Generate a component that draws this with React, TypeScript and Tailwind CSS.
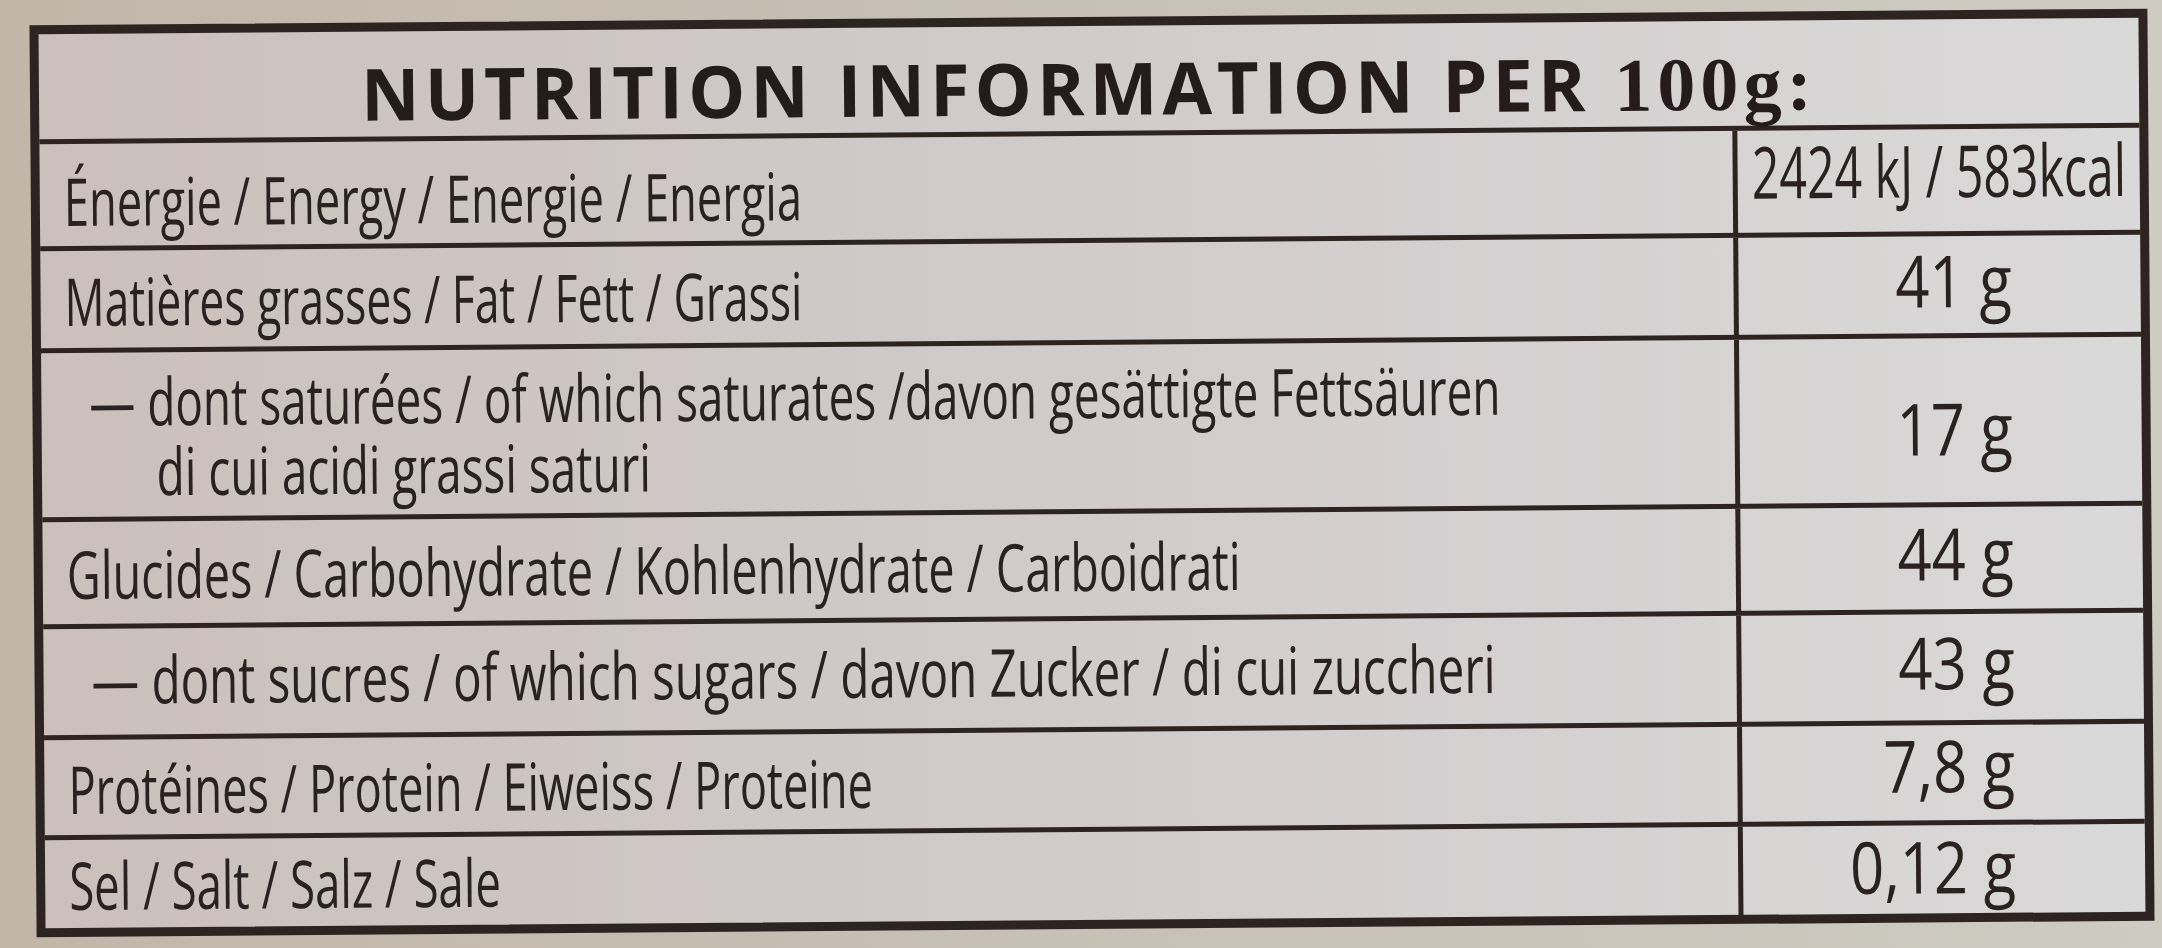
import React from "react";

const ink = "text-[#2a2220]";
const base = "inline-block origin-left whitespace-nowrap text-[66px] font-medium leading-none";
const value = "inline-block origin-right scale-x-[0.83] whitespace-nowrap text-[72px] font-medium leading-none";

function DataRow({
  h,
  indent,
  last,
  children,
  val,
  vpad = "pb-[12px]",
  lpad = "",
}: {
  h: string;
  indent?: boolean;
  last?: boolean;
  children: React.ReactNode;
  val: React.ReactNode;
  vpad?: string;
  lpad?: string;
}) {
  return (
    <div className={`flex ${h} ${last ? "" : "border-b-[5px]"} border-[#2d2421]`}>
      <div
        className={`flex w-[1698px] shrink-0 items-center border-r-[5px] border-[#2d2421] ${
          indent ? "pl-[48px]" : "pl-[24px]"
        } ${lpad}`}
      >
        {children}
      </div>
      <div className={`flex min-w-0 flex-1 items-center justify-end pr-[129px] ${vpad}`}>{val}</div>
    </div>
  );
}

export default function App() {
  return (
    <div
      className={`h-[948px] w-[2162px] overflow-hidden bg-linear-to-r from-[#c2b6a9] to-[#cdcbc2] pt-[17px] pl-[33px] font-['Open_Sans','Liberation_Sans',sans-serif] ${ink}`}
    >
      <div className="flex h-[912px] w-[2118px] rotate-[-0.45deg] flex-col border-[9px] border-[#2d2421] bg-linear-to-r from-[#cbc0bb] via-[#d2cbcc] to-[#dad9d9]">
        {/* Title */}
        <div className="flex h-[110px] shrink-0 items-start justify-center border-b-[5px] border-[#2d2421] pt-[25px]">
          <h1 className="whitespace-nowrap text-[72px] font-bold leading-none tracking-[0.07em] text-[#231c1a]">
            NUTRITION INFORMATION PER{" "}
            <span className="font-['Liberation_Serif',serif] text-[76px]">100g:</span>
          </h1>
        </div>

        {/* Energy */}
        <div className="flex h-[107px] shrink-0 border-b-[5px] border-[#2d2421]">
          <div className="flex w-[1698px] shrink-0 items-center border-r-[5px] border-[#2d2421] pl-[24px] pt-[10px]">
            <span className={`${base} scale-x-[0.685]`}>Énergie / Energy / Energie / Energia</span>
          </div>
          <div className="flex min-w-0 flex-1 items-center justify-center pb-[22px]">
            <span className="inline-block origin-center scale-x-[0.67] whitespace-nowrap text-[72px] font-medium leading-none">
              2424 kJ / 583kcal
            </span>
          </div>
        </div>

        <DataRow h="h-[102px] shrink-0" val={<span className={value}>41 g</span>}>
          <span className={`${base} scale-x-[0.673]`}>Matières grasses / Fat / Fett / Grassi</span>
        </DataRow>

        <DataRow h="h-[169px] shrink-0" indent vpad="pt-[14px]" val={<span className={value}>17 g</span>}>
          <div className="flex origin-left scale-x-[0.695] flex-col whitespace-nowrap text-[66px] font-medium leading-[70px]">
            <span>— dont saturées / of which saturates /davon gesättigte Fettsäuren</span>
            <span className="pl-[96px]">di cui acidi grassi saturi</span>
          </div>
        </DataRow>

        <DataRow h="h-[107px] shrink-0" val={<span className={value}>44 g</span>}>
          <span className={`${base} scale-x-[0.707]`}>Glucides / Carbohydrate / Kohlenhydrate / Carboidrati</span>
        </DataRow>

        <DataRow h="h-[111px] shrink-0" indent lpad="pb-[8px]" val={<span className={value}>43 g</span>}>
          <span className={`${base} scale-x-[0.72]`}>— dont sucres / of which sugars / davon Zucker / di cui zuccheri</span>
        </DataRow>

        <DataRow h="h-[100px] shrink-0" vpad="pb-[18px]" val={<span className={value}>7,8 g</span>}>
          <span className={`${base} scale-x-[0.685]`}>Protéines / Protein / Eiweiss / Proteine</span>
        </DataRow>

        <DataRow h="flex-1" last vpad="pb-[8px]" val={<span className={value}>0,12 g</span>}>
          <span className={`${base} scale-x-[0.69]`}>Sel / Salt / Salz / Sale</span>
        </DataRow>
      </div>
    </div>
  );
}
